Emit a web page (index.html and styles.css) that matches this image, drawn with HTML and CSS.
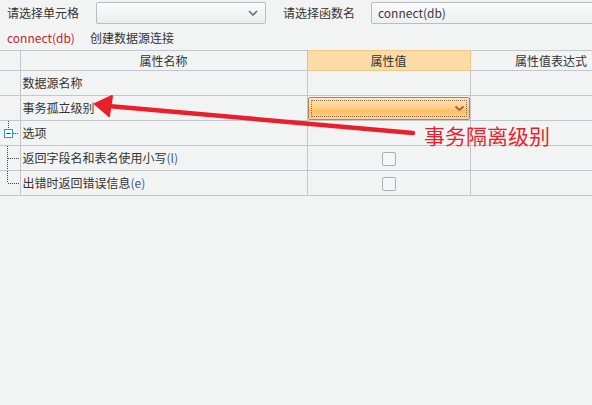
FILE: index.html
```html
<!DOCTYPE html>
<html>
<head>
<meta charset="utf-8">
<link rel="stylesheet" href="styles.css">
</head>
<body>
<div class="page">
  <div class="toolbar">
    <span class="label l1">请选择单元格</span>
    <div class="combo">
      <svg class="chev" width="10" height="6" viewBox="0 0 10 6"><path d="M1 1 L5 5 L9 1" fill="none" stroke="#6a6e72" stroke-width="1.6"/></svg>
    </div>
    <span class="label l2">请选择函数名</span>
    <div class="field">connect(db)</div>
  </div>
  <div class="subbar">
    <span class="fn">connect(db)</span>
    <span class="desc">创建数据源连接</span>
  </div>
  <table class="grid">
    <colgroup>
      <col class="c0"><col class="c1"><col class="c2"><col class="c3">
    </colgroup>
    <thead>
      <tr>
        <th></th>
        <th>属性名称</th>
        <th class="active">属性值</th>
        <th>属性值表达式</th>
      </tr>
    </thead>
    <tbody>
      <tr>
        <td></td>
        <td class="name">数据源名称</td>
        <td></td>
        <td></td>
      </tr>
      <tr>
        <td></td>
        <td class="name">事务孤立级别</td>
        <td class="val">
          <div class="dd">
            <div class="focus"></div>
            <svg class="ddchev" width="11" height="7" viewBox="0 0 11 7"><path d="M1.5 1.5 L5.5 5 L9.5 1.5" fill="none" stroke="#9a6a3a" stroke-width="2"/></svg>
          </div>
        </td>
        <td></td>
      </tr>
      <tr>
        <td class="tree">
          <svg width="20" height="24" viewBox="0 0 20 24"><path d="M8.5 0 V9" stroke="#444" stroke-dasharray="1 1"/><rect x="4.5" y="8.5" width="8" height="8" fill="#fff" stroke="#2f9cc4"/><path d="M6.5 12.5 H10.5" stroke="#333"/><path d="M13 12.5 H19" stroke="#444" stroke-dasharray="1 1"/></svg>
        </td>
        <td class="name">选项</td>
        <td></td>
        <td></td>
      </tr>
      <tr>
        <td class="tree">
          <svg width="20" height="24" viewBox="0 0 20 24"><path d="M7.5 0 V24" stroke="#444" stroke-dasharray="1 1"/><path d="M8 12.5 H19" stroke="#444" stroke-dasharray="1 1"/></svg>
        </td>
        <td class="name">返回字段名和表名使用小写<span class="key">(l)</span></td>
        <td class="chk"><span class="box"></span></td>
        <td></td>
      </tr>
      <tr>
        <td class="tree">
          <svg width="20" height="24" viewBox="0 0 20 24"><path d="M7.5 0 V12" stroke="#444" stroke-dasharray="1 1"/><path d="M8 12.5 H19" stroke="#444" stroke-dasharray="1 1"/></svg>
        </td>
        <td class="name">出错时返回错误信息<span class="key">(e)</span></td>
        <td class="chk"><span class="box"></span></td>
        <td></td>
      </tr>
    </tbody>
  </table>
  <svg class="arrow" width="592" height="405" viewBox="0 0 592 405">
    <path d="M108 106 L413 133" stroke="#ea1f2b" stroke-width="4.5" stroke-linecap="round" fill="none"/>
    <path d="M95 104 L112 96 L109 116 Z" fill="#ea1f2b" stroke="#ea1f2b" stroke-width="2" stroke-linejoin="round"/>
  </svg>
  <div class="note">事务隔离级别</div>
</div>
</body>
</html>
```
FILE: styles.css
```css
* { box-sizing: border-box; }
html, body { margin: 0; padding: 0; }
body {
  background: #f2f3f3;
  font-family: "Noto Sans CJK SC", "Noto Sans", sans-serif;
  font-size: 12px;
  color: #333;
  width: 592px;
  height: 405px;
  overflow: hidden;
}
.page { position: relative; width: 592px; height: 405px; overflow: hidden; }
.toolbar {
  display: flex;
  align-items: center;
  height: 24px;
  padding-top: 1px;
}
.label { line-height: 22px; white-space: nowrap; }
.l1 { margin-left: 7px; width: 89px; }
.l2 { margin-left: 17px; width: 88px; }
.combo {
  width: 170px;
  height: 22px;
  border: 1px solid #b9bdc1;
  border-radius: 2px;
  background: linear-gradient(#fbfbfb, #eceded);
  display: flex;
  align-items: center;
  justify-content: flex-end;
  padding-right: 7px;
}
.field {
  flex: 1;
  height: 22px;
  margin-right: -4px;
  border: 1px solid #b9bdc1;
  border-radius: 2px;
  background: linear-gradient(#fbfbfb, #eeefef);
  line-height: 20px;
  padding-left: 6px;
  color: #3a3a3a;
}
.subbar {
  display: flex;
  align-items: center;
  height: 26px;
  padding-left: 7px;
  padding-top: 1px;
}
.fn { color: #c0282e; width: 83px; }
.desc { color: #333; }
.grid {
  border-collapse: collapse;
  table-layout: fixed;
  width: 632px;
  border-top: 1px solid #b9bdc1;
}
.c0 { width: 20px; }
.c1 { width: 287px; }
.c2 { width: 163px; }
.c3 { width: 162px; }
.grid th, .grid td {
  border: 1px solid #c3c7cb;
  padding: 0;
  white-space: nowrap;
  overflow: hidden;
  line-height: 16px;
}
.grid th:first-child, .grid td:first-child { border-left: none; }
.grid th {
  height: 20px;
  font-weight: normal;
  text-align: center;
  color: #333;
}
.grid th.active {
  background: #fcdca6;
  border: 1px solid #f3c987;
}
.grid td { height: 25px; }
.grid td.name { padding-left: 2px; }
.key { color: #3b5a9a; }
.grid td.tree { line-height: 0; vertical-align: top; }
.grid td.tree svg { display: block; }
.grid td.val { padding: 0; vertical-align: middle; }
.dd {
  position: relative;
  height: 23px;
  border: 1px solid #a08868;
  border-radius: 2px;
  background: linear-gradient(#ffe6bd 0%, #ffd08a 45%, #ffbe62 62%, #ffd49a 100%);
  display: flex;
  align-items: center;
  justify-content: flex-end;
  padding-right: 4px;
}
.focus {
  position: absolute;
  left: 2px; top: 2px; right: 2px; bottom: 2px;
  border: 1px dotted #8a6a4a;
}
.ddchev { position: relative; }
.chk { text-align: center; vertical-align: middle; }
.box {
  display: inline-block;
  width: 14px;
  height: 14px;
  border: 1px solid #a9b0b7;
  border-radius: 2px;
  background: #f5f6f7;
  vertical-align: middle;
}
.arrow { position: absolute; left: 0; top: 0; pointer-events: none; }
.note {
  position: absolute;
  left: 424px;
  top: 121px;
  font-size: 21px;
  line-height: 28px;
  color: #ea1f2b;
}
```
